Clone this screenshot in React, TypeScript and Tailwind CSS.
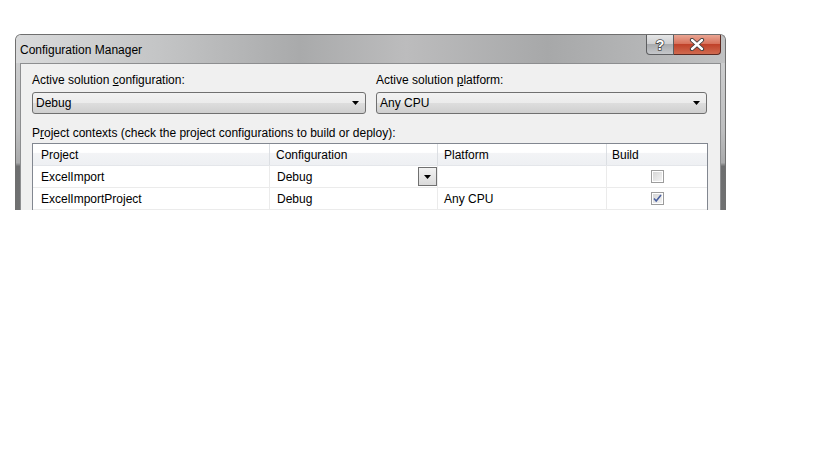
import React from 'react';

const font = "font-['Liberation_Sans',Arial,sans-serif]";

const Combo = ({ value }: { value: string }) => (
  <div className="h-[22px] flex items-center justify-between rounded-[3px] border border-[#707070] bg-[linear-gradient(to_bottom,#f2f2f2_0%,#ebebeb_50%,#dddddd_51%,#cfcfcf_100%)] pl-[3px] pr-[6px]">
    <span>{value}</span>
    <svg width="7" height="4" viewBox="0 0 7 4">
      <path d="M0 0h7L3.5 4z" fill="#000" />
    </svg>
  </div>
);

const Check = ({ checked }: { checked?: boolean }) => (
  <div className="w-[13px] h-[13px] border border-[#9c9c9c] bg-white p-[1px]">
    <div className="w-full h-full bg-[linear-gradient(135deg,#d6d6d6,#f3f3f3)] flex items-center justify-center">
      {checked && (
        <svg width="9" height="9" viewBox="0 0 9 9">
          <path d="M1 4.5l2.2 2.5L8 1" stroke="#4b61a0" strokeWidth="1.6" fill="none" />
        </svg>
      )}
    </div>
  </div>
);

const rows = [
  { project: 'ExcelImport', config: 'Debug', platform: '', build: false, combo: true },
  { project: 'ExcelImportProject', config: 'Debug', platform: 'Any CPU', build: true, combo: false },
];

export default function App() {
  return (
    <div className={`w-[819px] h-[460px] bg-white text-[12px] text-black ${font}`}>
      <div className="pl-[15px] pt-[34px]">
        <div className="w-[711px] h-[176px] overflow-hidden flex flex-col rounded-t-[6px] border border-b-0 border-[#6f6f6f] bg-[linear-gradient(to_bottom,#d2d3d4_0%,#bdbebf_55%,#a9aaab_73%,#6d6e6f_75%,#707172_100%)]">
          {/* title bar */}
          <div className="h-[28px] flex items-start bg-[linear-gradient(to_right,#d9dadb_0%,#c4c5c6_20%,#a9aaab_40%,#bcbcbd_55%,#a7a8a9_75%,#c0c1c2_100%)]">
            <div className="pl-[4px] pt-[8px] leading-[15px]">Configuration Manager</div>
            <div className="flex-1" />
            <div className="flex mr-[4px]">
              <div className="w-[28px] h-[20px] rounded-bl-[4px] border border-t-0 border-[#5d5e60] bg-[linear-gradient(to_bottom,#e4e5e6_0%,#cfd0d2_45%,#a9abae_50%,#c5c7ca_100%)] flex items-center justify-center">
                <span className="font-bold text-[14px] text-white leading-none [paint-order:stroke_fill] [-webkit-text-stroke:1.6px_#4a4a4a]">?</span>
              </div>
              <div className="w-[47px] h-[20px] rounded-br-[4px] border border-t-0 border-l-0 border-[#5d2a22] bg-[linear-gradient(to_bottom,#e9a593_0%,#d8735d_45%,#c0422a_50%,#d06a4f_100%)] flex items-center justify-center">
                <svg width="16" height="13" viewBox="0 0 16 13">
                  <path d="M3 2l10 9M13 2L3 11" stroke="#3b3b3b" strokeWidth="4.2" strokeLinecap="round" />
                  <path d="M3 2l10 9M13 2L3 11" stroke="#ffffff" strokeWidth="2.4" strokeLinecap="round" />
                </svg>
              </div>
            </div>
          </div>

          {/* client area */}
          <div className="flex-1 mx-[4px] border border-b-0 border-[#8d8e90] bg-[#f0f0f0] pl-[11px] pr-[13px] pt-[8px]">
            <div className="flex gap-[10px]">
              <div className="w-[334px] flex flex-col gap-[4px]">
                <div className="leading-[16px]">
                  Active solution <span className="underline">c</span>onfiguration:
                </div>
                <Combo value="Debug" />
              </div>
              <div className="flex-1 flex flex-col gap-[4px]">
                <div className="leading-[16px]">
                  Active solution <span className="underline">p</span>latform:
                </div>
                <Combo value="Any CPU" />
              </div>
            </div>

            <div className="mt-[11px] leading-[16px]">
              P<span className="underline">r</span>oject contexts (check the project configurations to build or deploy):
            </div>

            <div className="mt-[2px] w-[676px] border border-b-0 border-[#828790] bg-white">
              <div className="grid grid-cols-[237px_168px_169px_1fr] h-[22px] bg-[linear-gradient(to_bottom,#ffffff_0%,#ffffff_40%,#f3f4f6_45%,#eef0f3_100%)] border-b border-[#e4e6ea]">
                <div className="pl-[8px] flex items-center border-r border-[#dcdfe3]">Project</div>
                <div className="pl-[6px] flex items-center border-r border-[#dcdfe3]">Configuration</div>
                <div className="pl-[6px] flex items-center border-r border-[#dcdfe3]">Platform</div>
                <div className="pl-[5px] flex items-center">Build</div>
              </div>
              {rows.map((r) => (
                <div key={r.project} className="grid grid-cols-[237px_168px_169px_1fr] h-[22px] border-b border-[#ebebeb]">
                  <div className="pl-[8px] flex items-center border-r border-[#ebebeb]">{r.project}</div>
                  <div className="pl-[7px] flex items-center justify-between border-r border-[#ebebeb]">
                    <span>{r.config}</span>
                    {r.combo && (
                      <div className="w-[19px] h-[19px] border border-[#707070] bg-[linear-gradient(to_bottom,#f2f2f2,#dadada)] flex items-center justify-center">
                        <svg width="7" height="4" viewBox="0 0 7 4">
                          <path d="M0 0h7L3.5 4z" fill="#000" />
                        </svg>
                      </div>
                    )}
                  </div>
                  <div className="pl-[6px] flex items-center border-r border-[#ebebeb]">{r.platform}</div>
                  <div className="flex items-center justify-center pl-[1px]">
                    <Check checked={r.build} />
                  </div>
                </div>
              ))}
            </div>
          </div>
        </div>
      </div>
    </div>
  );
}
